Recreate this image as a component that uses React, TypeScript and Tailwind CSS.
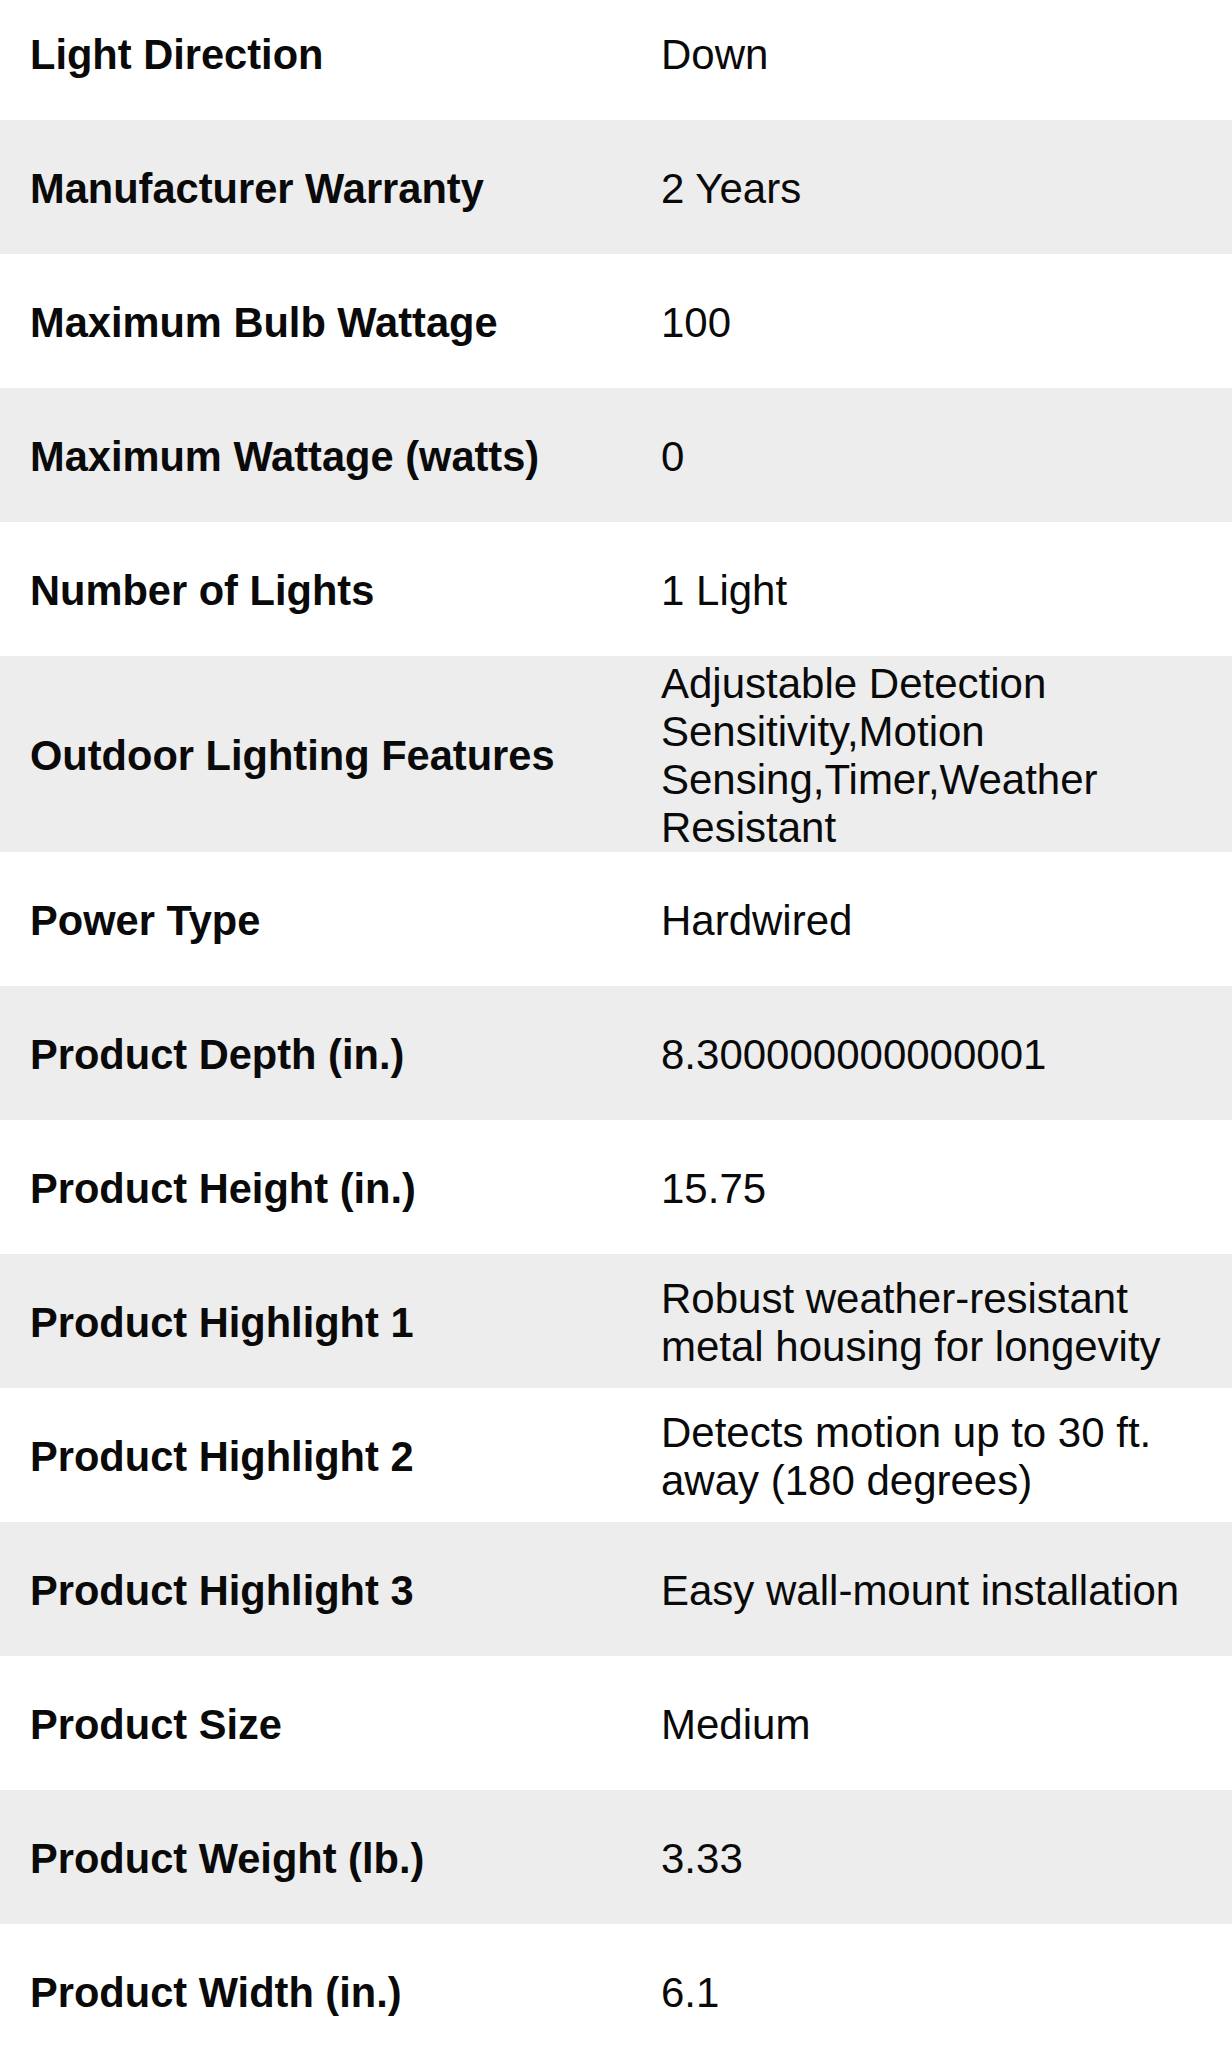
import React from 'react';

const specs: [string, string][] = [
  ['Light Direction', 'Down'],
  ['Manufacturer Warranty', '2 Years'],
  ['Maximum Bulb Wattage', '100'],
  ['Maximum Wattage (watts)', '0'],
  ['Number of Lights', '1 Light'],
  ['Outdoor Lighting Features', 'Adjustable Detection Sensitivity,Motion Sensing,Timer,Weather Resistant'],
  ['Power Type', 'Hardwired'],
  ['Product Depth (in.)', '8.300000000000001'],
  ['Product Height (in.)', '15.75'],
  ['Product Highlight 1', 'Robust weather-resistant metal housing for longevity'],
  ['Product Highlight 2', 'Detects motion up to 30 ft. away (180 degrees)'],
  ['Product Highlight 3', 'Easy wall-mount installation'],
  ['Product Size', 'Medium'],
  ['Product Weight (lb.)', '3.33'],
  ['Product Width (in.)', '6.1'],
];

const SpecRow = ({ label, value, shaded }: { label: string; value: string; shaded: boolean }) => (
  <div className={`flex items-center min-h-[134px] pt-[4px] ${shaded ? 'bg-[#ededed]' : 'bg-white'}`}>
    <div className="w-[661px] shrink-0 pl-[30px] pr-4 text-[41.6px] font-bold">{label}</div>
    <div className="flex-1 pr-[30px]">{value}</div>
  </div>
);

export default function App() {
  return (
    <div className="w-[1232px] h-[2048px] overflow-hidden bg-white">
      <div className="-mt-[14px] text-[42px] leading-[48px] text-[#0a0a0a] font-['Liberation_Sans',Arial,sans-serif]">
        {specs.map(([label, value], i) => (
          <SpecRow key={label} label={label} value={value} shaded={i % 2 === 1} />
        ))}
      </div>
    </div>
  );
}
